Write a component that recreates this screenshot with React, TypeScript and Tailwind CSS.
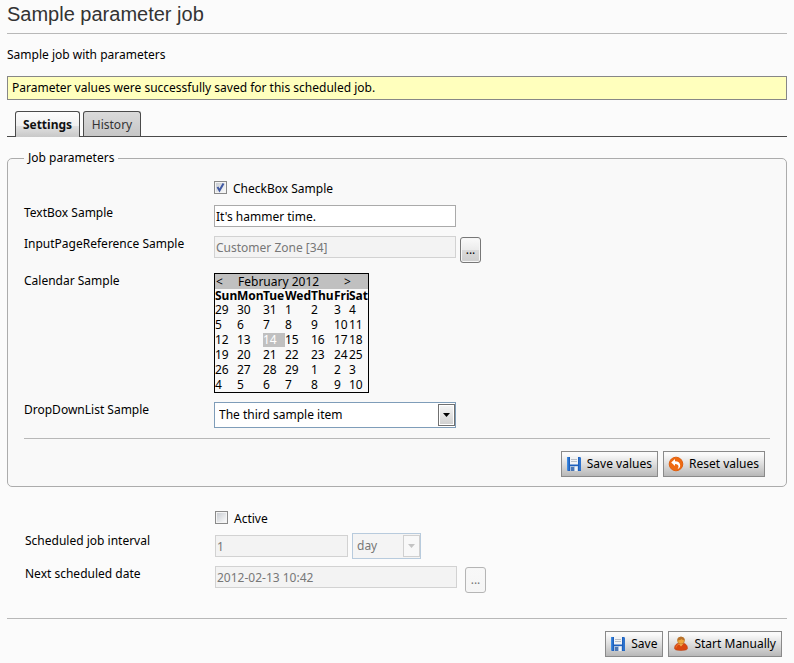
import { useState } from 'react';
import type { ReactNode } from 'react';

function SaveIcon() {
  return (
    <svg width="16" height="16" viewBox="0 0 16 16" aria-hidden="true">
      <path d="M1 1h13l1 1v13H2l-1-1z" fill="#1c5fbd" />
      <path d="M1 1h1.500v13.500L1 14z" fill="#3d8ae0" />
      <path d="M13.500 1.500h1v13h-1z" fill="#3f86dc" />
      <rect x="4" y="1" width="8" height="7.500" fill="#f1f3f5" />
      <path d="M5 3.500h6M5 5.500h6" stroke="#b9bec6" />
      <rect x="4" y="10" width="8" height="5" fill="#a9bfdc" />
      <rect x="5" y="11" width="3" height="4" fill="#4a76b4" />
      <rect x="9" y="10.500" width="2.500" height="4.500" fill="#eef3f8" />
    </svg>
  );
}

function ResetIcon() {
  return (
    <svg width="16" height="16" viewBox="0 0 16 16" aria-hidden="true">
      <circle cx="8" cy="8" r="6.800" fill="#ee6a12" stroke="#e05f0e" />
      <path d="M3.200 6.500 7 3v2.200c3.200 0 5.200 1.600 5.200 4.200 0 1.700-1 2.900-2.600 3.500.7-1 .9-1.600.9-2.400 0-1.600-1.200-2.500-3.500-2.500V10z" fill="#fff" />
    </svg>
  );
}

function PersonIcon() {
  return (
    <svg width="16" height="16" viewBox="0 0 16 16" aria-hidden="true">
      <path d="M1.500 12.500c0-3.500 2-5.500 6.500-5.500s6.500 2 6.500 5.500c0 1.300-2.500 2-6.500 2s-6.500-.7-6.500-2z" fill="#d9480f" stroke="#b8380c" strokeWidth=".5" />
      <path d="M3 11.500c.3-1.800 1.300-2.800 3-3.200" fill="none" stroke="#f0803a" />
      <path d="M5.500 7.500 8 10.500l2.500-3z" fill="#f6b04a" />
      <circle cx="8" cy="4.500" r="3.500" fill="#f0a83c" stroke="#b5742a" strokeWidth=".6" />
      <path d="M4.500 4.500C4.200 2 6 .8 8 .8s3.800 1.200 3.600 3.400C10 4.100 9 3.600 8.400 2.900 7.500 3.900 6 4.300 4.500 4.500z" fill="#b8722c" />
    </svg>
  );
}

function CommandButton({ icon, children, onClick }: { icon: ReactNode; children: ReactNode; onClick?: () => void }) {
  return (
    <button
      type="button"
      onClick={onClick}
      className="flex items-center gap-[5px] whitespace-nowrap border border-[#8a8a8a] bg-linear-to-b from-[#fafafa] from-10% via-[#dedede] via-50% to-[#b8b8b8] py-1 pr-[5px] pl-1 text-black"
    >
      {icon}
      <span>{children}</span>
    </button>
  );
}

function PickerButton({ label, disabled }: { label: string; disabled?: boolean }) {
  return (
    <button
      type="button"
      aria-label={label}
      disabled={disabled}
      className="h-[26px] w-[21px] shrink-0 rounded-[3px] border border-[#777] bg-[linear-gradient(#fafafa,#ebebeb_50%,#dadada_50%,#cecece)] text-black shadow-[inset_0_0_0_1px_#f6f6f6] disabled:border-[#b5b5b5] disabled:bg-[linear-gradient(#f8f8f8,#f5f5f5)] disabled:text-[#777]"
    >
      ...
    </button>
  );
}

function CheckBox({ id, label, checked, onChange }: { id: string; label: string; checked: boolean; onChange: (v: boolean) => void }) {
  return (
    <div className="flex items-start gap-[6px]">
      <span className="relative mt-px flex size-[13px]">
        <input
          id={id}
          type="checkbox"
          checked={checked}
          onChange={(e) => onChange(e.target.checked)}
          className="size-[13px] appearance-none border border-[#8a8a8a] bg-linear-to-br from-[#c4c8ce] to-white shadow-[inset_0_0_0_1px_#f4f4f4]"
        />
        {checked && (
          <svg className="pointer-events-none absolute inset-0" width="13" height="13" viewBox="0 0 13 13" aria-hidden="true">
            <path d="M3.500 6 5.500 9.500 9.500 2.500" fill="none" stroke="#4059a3" strokeWidth="2" />
          </svg>
        )}
      </span>
      <label htmlFor={id} className="leading-[18px]">{label}</label>
    </div>
  );
}

function DropDown({ id, label, options, defaultValue, disabled }: { id: string; label?: string; options: string[]; defaultValue: string; disabled?: boolean }) {
  return (
    <div className="relative h-[26px] w-full">
      <select
        id={id}
        aria-label={label}
        defaultValue={defaultValue}
        disabled={disabled}
        className="size-full appearance-none border border-[#7f9db9] bg-white pr-5 pl-1 text-black opacity-100 disabled:border-[#b8cbdd] disabled:bg-[#f4f4f4] disabled:text-[#777]"
      >
        {options.map((o) => (
          <option key={o}>{o}</option>
        ))}
      </select>
      <span
        className={
          disabled
            ? 'pointer-events-none absolute top-[2px] right-px flex h-[22px] w-[17px] items-center justify-center border border-[#d0d0d0] bg-[#f8f8f8]'
            : 'pointer-events-none absolute top-[2px] right-px flex h-[22px] w-[17px] items-center justify-center border border-[#707070] bg-linear-to-b from-[#f6f6f6] to-[#cfcfcf] shadow-[inset_0_0_0_1px_#fff]'
        }
      >
        <svg width="7" height="4" viewBox="0 0 7 4" aria-hidden="true">
          <path d="M0 0h7L3.500 4z" fill={disabled ? '#c4c4c4' : '#000'} />
        </svg>
      </span>
    </div>
  );
}

function FieldRow({ label, htmlFor, children }: { label: string; htmlFor?: string; children: ReactNode }) {
  return (
    <div className="flex items-start">
      <div className="w-[190px] shrink-0">
        {htmlFor ? <label htmlFor={htmlFor}>{label}</label> : label}
      </div>
      {children}
    </div>
  );
}

const textBox =
  'h-[22px] border border-[#aaa] bg-white px-px text-black disabled:border-[#d2d2d2] disabled:bg-[#f3f3f3] disabled:text-[#777]';

const weekdays = ['Sun', 'Mon', 'Tue', 'Wed', 'Thu', 'Fri', 'Sat'];
const weeks = [
  [29, 30, 31, 1, 2, 3, 4],
  [5, 6, 7, 8, 9, 10, 11],
  [12, 13, 14, 15, 16, 17, 18],
  [19, 20, 21, 22, 23, 24, 25],
  [26, 27, 28, 29, 1, 2, 3],
  [4, 5, 6, 7, 8, 9, 10],
];

function Calendar() {
  return (
    <div className="w-[155px] border border-black leading-[15px]">
      <div className="flex bg-[#c0c0c0] pl-px">
        <button type="button" aria-label="Previous month" className="w-5 text-left">&lt;</button>
        <span className="flex-1 pl-[2px]">February 2012</span>
        <button type="button" aria-label="Next month" className="w-6 text-left">&gt;</button>
      </div>
      <table className="h-[103px] w-full table-fixed border-collapse text-left leading-[14px]">
        <colgroup>
          <col className="w-[22px]" />
          <col className="w-[26px]" />
          <col className="w-[22px]" />
          <col className="w-[26px]" />
          <col className="w-[23px]" />
          <col className="w-[15px]" />
          <col />
        </colgroup>
        <thead>
          <tr>
            {weekdays.map((d) => (
              <th key={d} scope="col" className="p-0 font-bold">{d}</th>
            ))}
          </tr>
        </thead>
        <tbody>
          {weeks.map((week, w) => (
            <tr key={w}>
              {week.map((d, i) => (
                <td key={i} className={w === 2 && d === 14 ? 'bg-[#c0c0c0] p-0 text-white' : 'p-0'}>{d}</td>
              ))}
            </tr>
          ))}
        </tbody>
      </table>
    </div>
  );
}

export default function App() {
  const [sample, setSample] = useState(true);
  const [active, setActive] = useState(false);

  return (
    <div className="min-h-screen bg-[#fbfbfb] px-[7px] pb-[7px] font-['Noto_Sans',sans-serif] text-[12px] leading-4 text-black">
      <h1 className="border-b border-[#b8b8b8] pt-[2px] pb-[7px] font-['Liberation_Sans',sans-serif] text-[20px] leading-6 text-[#333]">
        Sample parameter job
      </h1>
      <p className="pt-[13px]">Sample job with parameters</p>
      <p role="status" className="mt-[13px] border border-[#878787] bg-[#ffffbd] px-1 py-[3px]">
        Parameter values were successfully saved for this scheduled job.
      </p>

      <div role="tablist" className="mt-[11px] flex gap-[3px] border-b border-[#4a4a4a] pl-2">
        <button
          type="button"
          role="tab"
          aria-selected="true"
          className="-mb-px h-[26px] w-[65px] rounded-t-[3px] border border-b-0 border-[#4a4a4a] bg-[linear-gradient(#fcfcfc,#f0f0f0_55%,#e2e2e2_55%,#c8c8c8)] font-bold text-[#111]"
        >
          Settings
        </button>
        <button
          type="button"
          role="tab"
          aria-selected="false"
          className="h-[25px] w-[58px] rounded-t-[3px] border border-b-0 border-[#4a4a4a] bg-linear-to-b from-[#dadada] to-[#c6c6c6] pt-px text-[#333]"
        >
          History
        </button>
      </div>

      <fieldset className="mt-[13px] rounded-[5px] border border-[#acacac] bg-[#f9f9f9] px-4 pb-[9px]">
        <legend className="px-1">Job parameters</legend>
        <div className="mt-[14px] flex flex-col">
          <div className="pl-[190px]">
            <CheckBox id="sample" label="CheckBox Sample" checked={sample} onChange={setSample} />
          </div>
          <div className="mt-[7px]">
            <FieldRow label="TextBox Sample" htmlFor="text">
              <input id="text" defaultValue="It's hammer time." className={`${textBox} w-[242px]`} />
            </FieldRow>
          </div>
          <div className="mt-[9px]">
            <FieldRow label="InputPageReference Sample" htmlFor="page">
              <input id="page" disabled defaultValue="Customer Zone [34]" className={`${textBox} w-[242px]`} />
              <div className="flex pt-px pl-1">
                <PickerButton label="Select page" />
              </div>
            </FieldRow>
          </div>
          <div className="mt-[10px]">
            <FieldRow label="Calendar Sample">
              <Calendar />
            </FieldRow>
          </div>
          <div className="mt-[9px]">
            <FieldRow label="DropDownList Sample" htmlFor="drop">
              <div className="w-[242px]">
                <DropDown
                  id="drop"
                  options={['The first sample item', 'The second sample item', 'The third sample item']}
                  defaultValue="The third sample item"
                />
              </div>
            </FieldRow>
          </div>
        </div>
        <div className="mt-[10px] flex justify-end gap-[5px] border-t border-[#b8b8b8] pt-[12px] pr-[5px]">
          <CommandButton icon={<SaveIcon />}>Save values</CommandButton>
          <CommandButton icon={<ResetIcon />} onClick={() => setSample(true)}>Reset values</CommandButton>
        </div>
      </fieldset>

      <div className="flex flex-col pt-[23px] pl-[18px]">
        <div className="pl-[190px]">
          <CheckBox id="active" label="Active" checked={active} onChange={setActive} />
        </div>
        <div className="mt-[5px]">
          <FieldRow label="Scheduled job interval" htmlFor="interval">
            <div className="flex items-center gap-1">
              <input id="interval" disabled defaultValue="1" className={`${textBox} w-[133px]`} />
              <div className="w-[69px]">
                <DropDown id="unit" label="Interval unit" options={['hour', 'day', 'week']} defaultValue="day" disabled />
              </div>
            </div>
          </FieldRow>
        </div>
        <div className="mt-[7px]">
          <FieldRow label="Next scheduled date" htmlFor="date">
            <input id="date" disabled defaultValue="2012-02-13 10:42" className={`${textBox} w-[242px]`} />
            <div className="flex pt-px pl-2">
              <PickerButton label="Select date" disabled />
            </div>
          </FieldRow>
        </div>
      </div>

      <div className="mt-[25px] flex justify-end gap-[5px] border-t border-[#b8b8b8] pt-[12px]  pr-[5px]">
        <CommandButton icon={<SaveIcon />}>Save</CommandButton>
        <CommandButton icon={<PersonIcon />}>Start Manually</CommandButton>
      </div>
    </div>
  );
}
